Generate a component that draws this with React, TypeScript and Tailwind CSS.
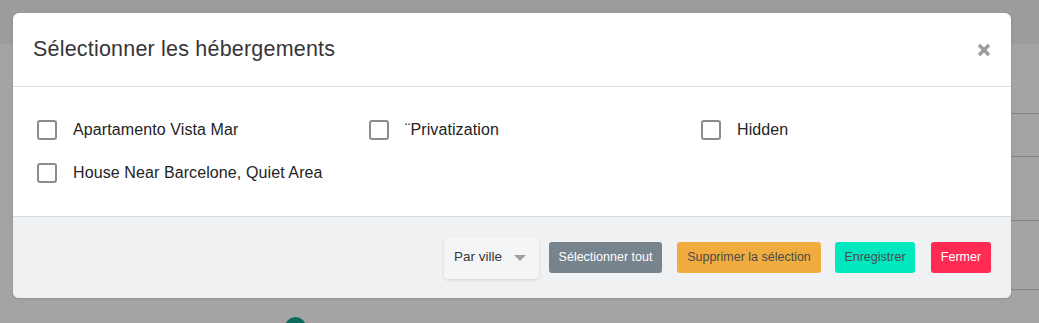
import React, { useState } from "react";

const font = { fontFamily: '"Liberation Sans", Arial, sans-serif' };

const logements = [
  "Apartamento Vista Mar",
  "¨Privatization",
  "Hidden",
  "House Near Barcelone, Quiet Area",
];

function Checkbox({ label }: { label: string }) {
  const [checked, setChecked] = useState(false);
  return (
    <label className="flex items-center h-[43px] px-6 cursor-pointer">
      <span
        onClick={() => setChecked(!checked)}
        className={`w-5 h-5 rounded-[3px] border-2 border-[#8c8c8c] shrink-0 ${
          checked ? "bg-[#8c8c8c]" : "bg-white"
        }`}
      ></span>
      <span className="ml-4 text-[16px] tracking-[0.1px] text-[#242424] whitespace-nowrap">{label}</span>
    </label>
  );
}

export default function App() {
  return (
    <div style={font} className="relative w-[1039px] h-[323px] overflow-hidden bg-[#a4a4a4]">
      {/* page behind the overlay */}
      <div className="h-11 bg-[#9c9c9c]"></div>
      <div className="flex flex-col items-end">
        <div className="w-[40px] h-[70px] border-b border-[#858585]"></div>
        <div className="w-[40px] h-[43px] border-b border-[#858585]"></div>
        <div className="w-[40px] h-[64px] border-b border-[#858585]"></div>
        <div className="w-[40px] h-[69px] border-b border-[#858585]"></div>
      </div>
      <div className="absolute left-[285px] top-[317px] w-[21px] h-[21px] rounded-full bg-[#0c6a5d]"></div>

      {/* modal */}
      <div className="absolute left-[13px] top-[13px] w-[998px] rounded-[6px] bg-white overflow-hidden shadow-sm">
        <div className="h-[74px] flex items-center justify-between pl-5 pr-[19px] border-b border-[#dbe1e1]">
          <span className="text-[21.5px] tracking-[0.2px] text-[#363636]">Sélectionner les hébergements</span>
          <button className="w-4 h-4 flex items-center justify-center">
            <svg width="14" height="14" viewBox="0 0 14 14">
              <path d="M2 2 L12 12 M12 2 L2 12" stroke="#9a9a9a" strokeWidth="3.2" strokeLinecap="butt" />
            </svg>
          </button>
        </div>
        <div className="grid grid-cols-[332px_332px_1fr] pt-[21px] pb-[22px]">
          {logements.map((l) => (
            <Checkbox key={l} label={l} />
          ))}
        </div>
        <div className="h-[82px] bg-[#f0f1f3] border-t border-[#d8dbdf] flex items-center justify-end pr-5 text-[12.5px] whitespace-nowrap">
          <div className="w-[95px] h-[42px] rounded-[4px] bg-[#f4f5f6] shadow-[0_1px_3px_rgba(0,0,0,0.12)] flex items-center pl-[10px] text-[13.5px] text-[#363636]">
            Par ville
            <span className="ml-[12px] w-0 h-0 border-l-[6px] border-r-[6px] border-t-[6px] border-l-transparent border-r-transparent border-t-[#a0a0a0]"></span>
          </div>
          <button className="ml-[10px] h-[31px] w-[113px] rounded-[3px] bg-[#77838d] text-white">
            Sélectionner tout
          </button>
          <button className="ml-[15px] h-[31px] w-[144px] rounded-[3px] bg-[#f0ac3e] text-[#4a4a4a]">
            Supprimer la sélection
          </button>
          <button className="ml-[14px] h-[31px] w-[80px] rounded-[3px] bg-[#00e8c0] text-[#4a4a4a]">
            Enregistrer
          </button>
          <button className="ml-4 h-[31px] w-[60px] rounded-[3px] bg-[#ff2b55] text-white">
            Fermer
          </button>
        </div>
      </div>
    </div>
  );
}
